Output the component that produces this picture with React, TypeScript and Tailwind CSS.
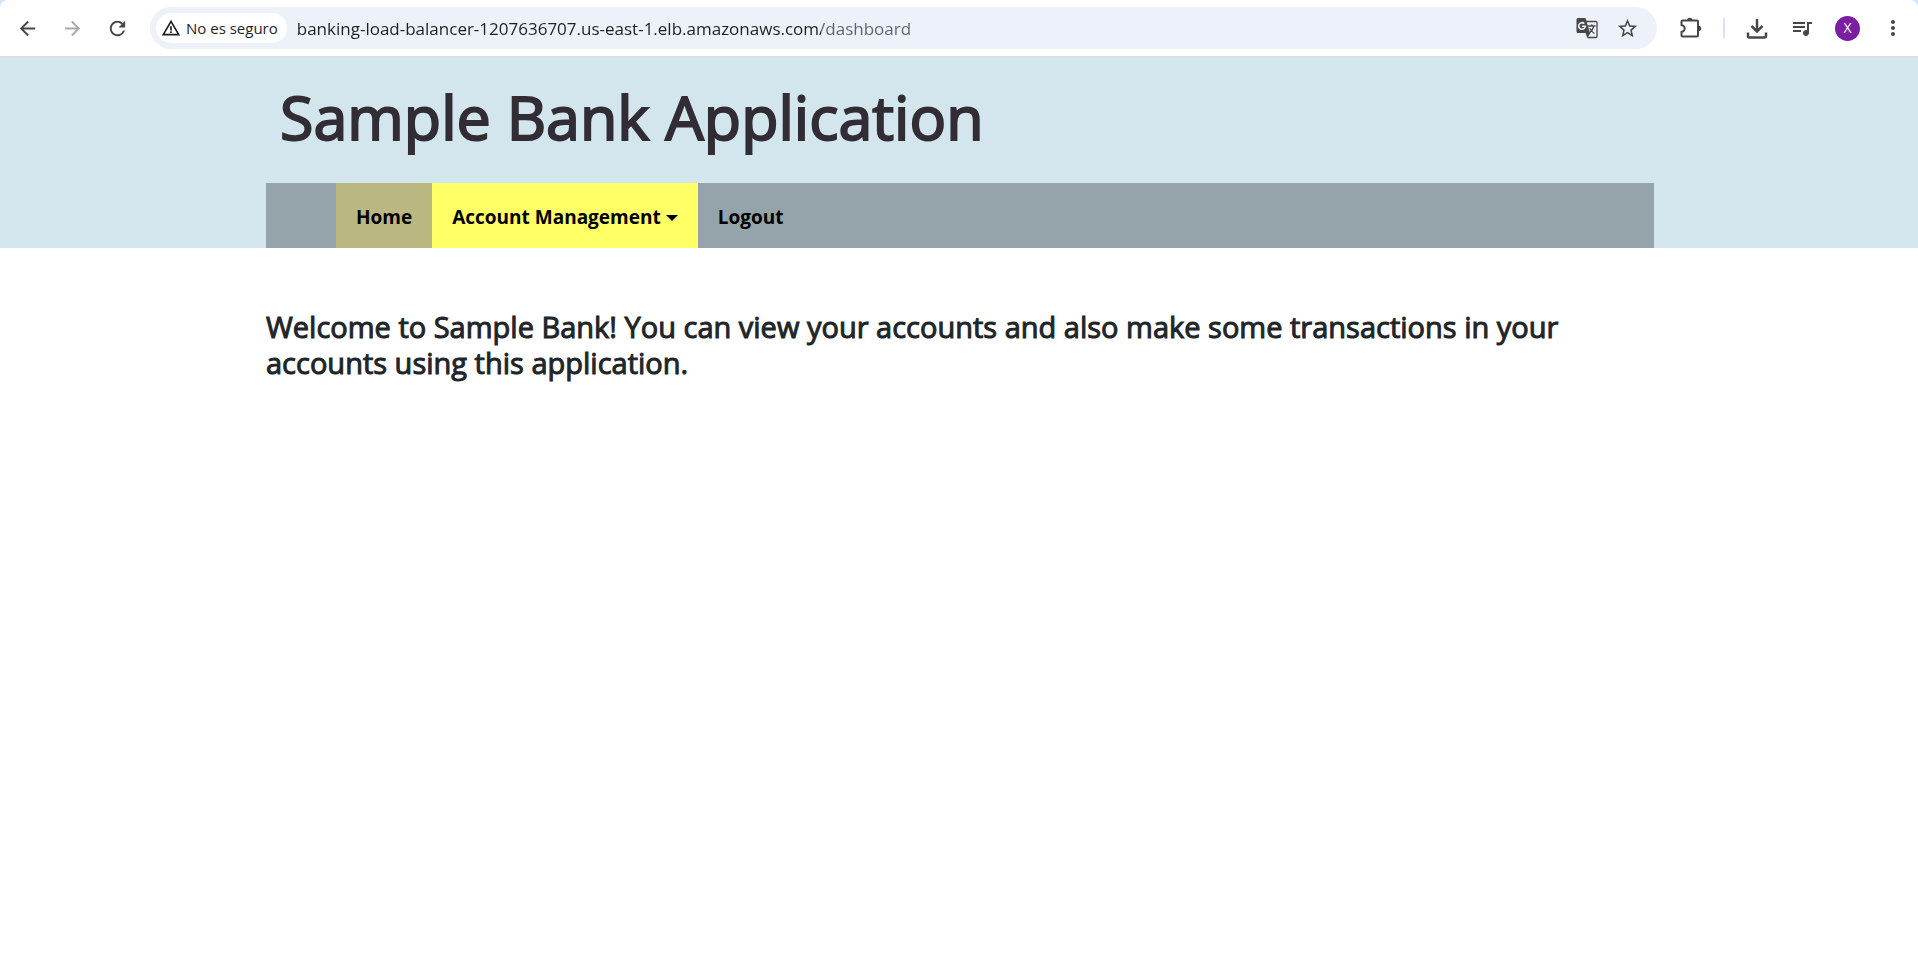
import type { ReactNode } from "react";
import {
  MdArrowBack,
  MdArrowForward,
  MdMoreVert,
  MdQueueMusic,
  MdRefresh,
  MdStarBorder,
  MdWarningAmber,
} from "react-icons/md";

function IconButton({ label, muted = false, children }: { label: string; muted?: boolean; children: ReactNode }) {
  return (
    <button
      type="button"
      aria-label={label}
      className={
        muted
          ? "flex size-6 shrink-0 items-center justify-center text-[#a9a9a9]"
          : "flex size-6 shrink-0 items-center justify-center text-[#474747]"
      }
    >
      {children}
    </button>
  );
}

function TranslateIcon() {
  return (
    <svg viewBox="0 0 24 24" className="size-6" aria-hidden="true">
      <path d="M10.5 5.500h10.200a1.300 1.300 0 0 1 1.300 1.300v13.400a1.300 1.300 0 0 1-1.300 1.300H13l-2-5" fill="none" stroke="currentColor" strokeWidth="1.300" />
      <path d="M3 2h7.500l4.500 15H3A1.500 1.500 0 0 1 1.500 15.500V3.500A1.500 1.500 0 0 1 3 2z" fill="currentColor" />
      <path d="M11.500 17h4l-3 4.500z" fill="currentColor" />
      <path d="M9.300 7.600A3.300 3.300 0 1 0 10.300 10.200H7" fill="none" stroke="#ecf1fa" strokeWidth="1.600" />
      <path d="M13 10h7.500M16.800 8.300V10M18.900 10c-.6 2.800-2.300 5.200-4.500 6.900M14.800 12.200c.8 2 2.600 3.900 4.600 5.300" fill="none" stroke="currentColor" strokeWidth="1.300" />
    </svg>
  );
}

function ExtensionIcon() {
  return (
    <svg viewBox="0 0 24 24" className="size-6" fill="none" stroke="currentColor" strokeWidth="2" aria-hidden="true">
      <path d="M3.500 4.500H18a1 1 0 0 1 1 1v14a1 1 0 0 1-1 1H3.500a1 1 0 0 1-1-1v-3.800a3.200 3.200 0 0 0 0-6.400V5.500a1 1 0 0 1 1-1z" strokeLinejoin="round" />
      <path d="M8 4.500a2.700 2.700 0 0 1 5.400 0zM19.500 9.800a2.700 2.700 0 0 1 0 5.400z" fill="currentColor" stroke="none" />
    </svg>
  );
}

function DownloadIcon() {
  return (
    <svg viewBox="0 0 24 24" className="size-6" fill="none" stroke="currentColor" strokeWidth="2.500" aria-hidden="true">
      <path d="M12 3v12M6.500 10l5.500 5.500 5.500-5.500" />
      <path d="M3 16.500V20a1.500 1.500 0 0 0 1.500 1.500h15A1.500 1.500 0 0 0 21 20v-3.500" />
    </svg>
  );
}

function Toolbar() {
  return (
    <div className="bg-[#d3e3fd]">
      <div className="flex h-14 items-center rounded-t-lg bg-white pr-[13px] pl-[15px]">
        <div className="flex items-center gap-[21px]">
          <IconButton label="Atrás"><MdArrowBack className="size-[23px]" /></IconButton>
          <IconButton label="Adelante" muted><MdArrowForward className="size-[23px]" /></IconButton>
          <IconButton label="Volver a cargar"><MdRefresh className="size-[23px]" /></IconButton>
        </div>
        <div className="ml-[21px] flex h-[42px] min-w-0 flex-1 items-center rounded-full bg-[#ecf1fa] pr-[18px] pl-[6px]">
          <button type="button" className="flex h-[30px] shrink-0 items-center gap-[5px] rounded-full bg-white pr-[9px] pl-[5px] text-[#1f1f1f]">
            <MdWarningAmber className="size-5" />
            <span className="text-[15px] font-medium whitespace-nowrap">No es seguro</span>
          </button>
          <input
            type="text"
            aria-label="Dirección"
            defaultValue="banking-load-balancer-1207636707.us-east-1.elb.amazonaws.com/dashboard"
            className="ml-[10px] h-8 min-w-0 flex-1 bg-linear-to-r from-[#1f1f1f] from-[524px] to-[#5f6368] to-[524px] bg-clip-text text-[17px] text-transparent outline-none"
          />
          <div className="flex items-center gap-4">
            <IconButton label="Traducir esta página"><TranslateIcon /></IconButton>
            <IconButton label="Añadir a marcadores"><MdStarBorder className="size-[23px]" /></IconButton>
          </div>
        </div>
        <div className="ml-[22px] flex items-center gap-[21px]">
          <IconButton label="Extensiones"><ExtensionIcon /></IconButton>
          <div className="-mx-px h-5 w-[2px] bg-[#d3e3fd]" />
          <IconButton label="Descargas"><DownloadIcon /></IconButton>
          <IconButton label="Control multimedia"><MdQueueMusic className="size-6" /></IconButton>
          <button type="button" aria-label="Perfil" className="flex size-[25px] items-center justify-center rounded-full bg-[#7b1fa2] text-sm text-white">X</button>
          <IconButton label="Menú"><MdMoreVert className="size-6" /></IconButton>
        </div>
      </div>
    </div>
  );
}

export default function App() {
  return (
    <div className="min-h-screen bg-white font-['Open_Sans','Noto_Sans',sans-serif]">
      <Toolbar />
      <header className="border-t border-[#dfdfdf] bg-[#d4e6ed] pr-[264px] pl-[266px]">
        <h1 className="px-[14px] pt-5 pb-[26px] text-[61px] leading-[80px] font-normal text-[#322d35] [-webkit-text-stroke:2px]">Sample Bank Application</h1>
        <nav className="bg-[#95a3aa] pl-[70px]">
          <ul className="flex text-[19px] leading-[61px] font-bold text-black">
            <li><a href="#home" className="block bg-[#bab880] px-5 pt-1">Home</a></li>
            <li>
              <button type="button" className="flex items-center gap-[5px] bg-[#ffff66] px-5 pt-1">
                Account Management
                <svg viewBox="0 0 12 6" className="h-[6px] w-3" aria-hidden="true"><path d="M0 0h12L6 6z" fill="currentColor" /></svg>
              </button>
            </li>
            <li><a href="#logout" className="block px-5 pt-1">Logout</a></li>
          </ul>
        </nav>
      </header>
      <main className="pt-[61px] pr-[264px] pl-[266px]">
        <h2 className="text-[29px] leading-9 font-normal text-[#212529] [-webkit-text-stroke:1px]">
          Welcome to Sample Bank! You can view your accounts and also make some transactions in your accounts using this application.
        </h2>
      </main>
    </div>
  );
}
